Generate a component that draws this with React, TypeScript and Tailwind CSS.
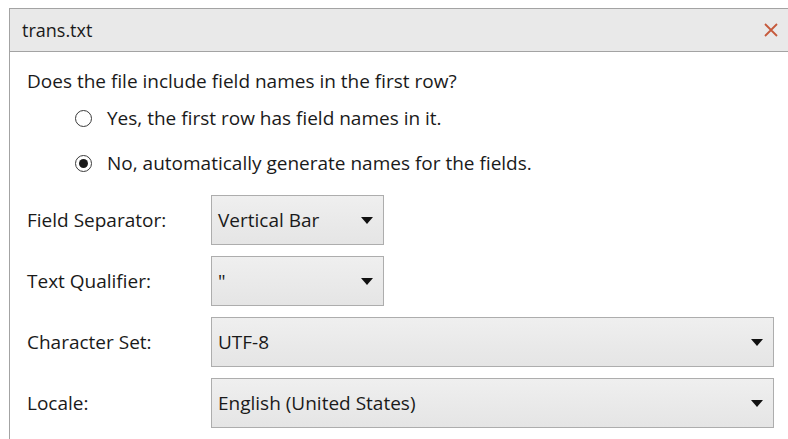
import { useState } from "react";

const font = { fontFamily: '"Open Sans", "Liberation Sans", sans-serif' };

function Caret() {
  return (
    <svg width="12" height="7" viewBox="0 0 12 7" className="shrink-0">
      <path d="M0 0 H12 L6 7 Z" fill="#111" />
    </svg>
  );
}

function Select({ value, wide }: { value: string; wide?: boolean }) {
  return (
    <div
      className={`flex items-center justify-between h-[50px] pl-[6px] pr-[10px] border border-[#adadad] bg-gradient-to-b from-[#efefef] to-[#e5e5e5] ${
        wide ? "w-[563px]" : "w-[173px]"
      }`}
    >
      <span className="text-[19px] text-[#1a1a1a]">{value}</span>
      <Caret />
    </div>
  );
}

function Radio({ checked, label, onClick }: { checked: boolean; label: string; onClick: () => void }) {
  return (
    <button onClick={onClick} className="flex items-center h-[26px] ml-[48px] text-left">
      <span className="w-[17px] h-[17px] rounded-full border border-[#3a3a3a] bg-white flex items-center justify-center shrink-0">
        {checked && <span className="w-[9px] h-[9px] rounded-full bg-[#1a1a1a]" />}
      </span>
      <span className="ml-[15px] text-[19px] text-[#1a1a1a]">{label}</span>
    </button>
  );
}

function Row({ label, children }: { label: string; children: React.ReactNode }) {
  return (
    <div className="flex items-center">
      <span className="w-[184px] text-[19px] text-[#1a1a1a]">{label}</span>
      {children}
    </div>
  );
}

export default function App() {
  const [hasHeader, setHasHeader] = useState(false);

  return (
    <div className="w-[788px] h-[439px] bg-white overflow-hidden" style={font}>
      <div className="ml-[9px] mt-[8px] h-[431px] border-l border-t border-[#a3a3a3]">
        {/* title bar */}
        <div className="h-[43px] bg-[#e9e9e9] border-b border-[#a3a3a3] flex items-center justify-between pl-[12px] pr-[10px]">
          <span className="text-[18px] text-[#1a1a1a]">trans.txt</span>
          <svg width="14" height="14" viewBox="0 0 14 14">
            <path d="M1 1 L13 13 M13 1 L1 13" stroke="#c65a3c" strokeWidth="1.8" />
          </svg>
        </div>

        <div className="pl-[17px] pt-[16px]">
          <div className="h-[26px] leading-[26px] text-[19px] text-[#1a1a1a]">
            Does the file include field names in the first row?
          </div>

          <div className="mt-[11px] flex flex-col gap-[19px]">
            <Radio checked={hasHeader} onClick={() => setHasHeader(true)} label="Yes, the first row has field names in it." />
            <Radio checked={!hasHeader} onClick={() => setHasHeader(false)} label="No, automatically generate names for the fields." />
          </div>

          <div className="mt-[19px] flex flex-col gap-[11px]">
            <Row label="Field Separator:">
              <Select value="Vertical Bar" />
            </Row>
            <Row label="Text Qualifier:">
              <Select value={'"'} />
            </Row>
            <Row label="Character Set:">
              <Select value="UTF-8" wide />
            </Row>
            <Row label="Locale:">
              <Select value="English (United States)" wide />
            </Row>
          </div>
        </div>
      </div>
    </div>
  );
}
